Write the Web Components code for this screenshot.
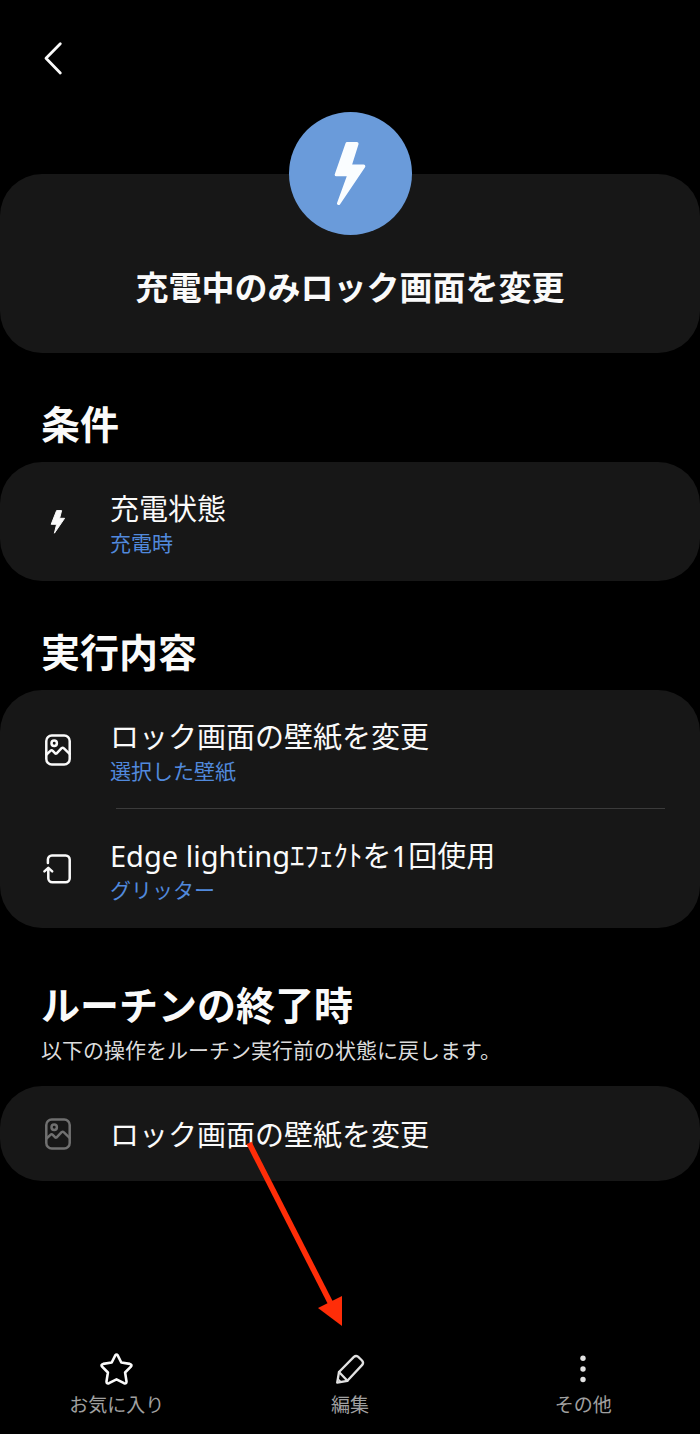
<!DOCTYPE html>
<html lang="ja">
<head>
<meta charset="utf-8">
<meta name="viewport" content="width=device-width, initial-scale=1">
<title>充電中のみロック画面を変更</title>
<style>
html {
    background: #000;
}

body {
    margin: 0;
    color: #fafafa;
    font-family: "Noto Sans", "Noto Sans CJK JP", sans-serif;
}
</style>
</head>
<body>
<routine-page>
    <routine-hero>充電中のみロック画面を変更</routine-hero>

    <routine-section heading="条件">
        <routine-row icon="bolt" detail="充電時">充電状態</routine-row>
    </routine-section>

    <routine-section heading="実行内容">
        <routine-row icon="picture" detail="選択した壁紙">ロック画面の壁紙を変更</routine-row>
        <routine-row icon="edge" detail="グリッター">Edge lightingｴﾌｪｸﾄを1回使用</routine-row>
    </routine-section>

    <routine-section heading="ルーチンの終了時" note="以下の操作をルーチン実行前の状態に戻します。">
        <routine-row icon="picture" muted>ロック画面の壁紙を変更</routine-row>
    </routine-section>

    <bottom-action slot="actions" icon="star">お気に入り</bottom-action>
    <bottom-action slot="actions" icon="pencil">編集</bottom-action>
    <bottom-action slot="actions" icon="more">その他</bottom-action>
</routine-page>

<script>
const icons = {
    back: `<svg width="36" height="36" viewBox="0 0 36 36" fill="none" stroke="currentColor" stroke-width="2.8" stroke-linecap="round" stroke-linejoin="round">
        <path d="M24.3 3.8 10 18.3 24.3 33"/></svg>`,
    bolt: `<svg width="32" height="36" viewBox="0 0 32 36" fill="currentColor" stroke="currentColor" stroke-linejoin="round">
        <path d="M14.6 6.6H19.6L17.6 14.3H22.6L12.4 29.2 14.6 20.3H9.2Z"/></svg>`,
    picture: `<svg width="32" height="36" viewBox="0 0 32 36" fill="none" stroke="currentColor" stroke-width="2.5" stroke-linecap="round" stroke-linejoin="round">
        <rect x="4.3" y="3.4" width="23.4" height="29.2" rx="5.5"/>
        <circle cx="12.2" cy="11.3" r="2.7"/>
        <path d="M4.5 22.5 8.7 18.6Q9.7 17.8 10.5 18.7L13 21.2Q14 22.1 14.9 21.1L19.6 16.2Q20.7 15.2 21.7 16.2L27.6 21.8"/></svg>`,
    edge: `<svg width="32" height="36" viewBox="0 0 32 36" fill="none" stroke="currentColor" stroke-width="2.5" stroke-linecap="round" stroke-linejoin="round">
        <path d="M5.9 12V8.4A4 4 0 0 1 9.9 4.4H23.7A4 4 0 0 1 27.7 8.4V27.3A4 4 0 0 1 23.7 31.3H10.3A4 4 0 0 1 6.3 27.3V17.5"/>
        <path d="M2.4 20.4 6.3 16.8 10.2 20.4"/></svg>`,
    star: `<svg width="36" height="36" viewBox="0 0 36 36" fill="none" stroke="#fafafa" stroke-width="2.6" stroke-linejoin="round">
        <path d="M16.3 4.3Q17.5 2.6 18.7 4.3L22.3 11.5 30.8 12.9Q33.5 13.6 31.9 15.6L26.1 21.5 27.5 30.4Q27.5 33.2 25 32.2L17.5 28.4 10 32.2Q7.5 33.2 7.5 30.4L8.9 21.5 3.1 15.6Q1.5 13.6 4.2 12.9L12.7 11.5Z"/></svg>`,
    pencil: `<svg width="36" height="36" viewBox="0 0 36 36" fill="none" stroke="#e2e2e2" stroke-width="2.3" stroke-linecap="round" stroke-linejoin="round">
        <path d="M5.2 31.6 7 21 21.9 5.9Q23.9 4.1 26 5.7L30 9.5Q32 11.8 30.2 13.9L15.4 29.8Z"/>
        <path d="M7 21 15.4 29.8"/>
        <path d="M5.8 27.8 9 31" stroke-width="1.6"/></svg>`,
    more: `<svg width="36" height="36" viewBox="0 0 36 36" fill="#e2e2e2">
        <circle cx="18" cy="7.3" r="2.7"/>
        <circle cx="18" cy="18" r="2.7"/>
        <circle cx="18" cy="28.5" r="2.7"/></svg>`
};

function attach(element, html) {
    const template = document.createElement('template');
    template.innerHTML = html;
    const root = element.attachShadow({ mode: 'open' });
    root.appendChild(template.content.cloneNode(true));
    return root;
}

customElements.define('routine-hero', class RoutineHero extends HTMLElement {
    constructor() {
        super();
        attach(this, `<style>
:host {
    display: flex;
    flex-direction: column;
    align-items: center;
}

.badge {
    display: flex;
    align-items: center;
    justify-content: center;
    width: 123px;
    height: 123px;
    border-radius: 50%;
    background: #6a9bda;
    z-index: 1;
}

/* the card starts at the middle of the badge */
.card {
    box-sizing: border-box;
    align-self: stretch;
    margin-top: -61px;
    padding: 90px 24px 41px;
    border-radius: 42px;
    background: #171717;
}

h1 {
    margin: 0;
    font-size: 33px;
    line-height: 48px;
    font-weight: bold;
    text-align: center;
}
</style>
<div class="badge">
    <svg width="32" height="63" viewBox="0 0 93 187" fill="#fafdff" stroke="#fafdff" stroke-width="10" stroke-linejoin="round" aria-hidden="true">
        <path d="M38 5H67L46 72H87L13 182 44 97H6Z"/>
    </svg>
</div>
<div class="card"><h1><slot></slot></h1></div>`);
    }
});

customElements.define('routine-section', class RoutineSection extends HTMLElement {
    constructor() {
        super();
        const note = this.getAttribute('note');
        attach(this, `<style>
:host {
    display: block;
    padding-top: 47px;
}

:host([note]) {
    padding-top: 53px;
}

header {
    padding: 0 41px 14px;
}

:host([note]) header {
    padding-bottom: 21px;
}

h2 {
    margin: 0;
    font-size: 39px;
    line-height: 48px;
    font-weight: bold;
}

p {
    margin: 6px 0 0;
    color: #dcdcdc;
    font-size: 21px;
    line-height: 30px;
}

.card {
    border-radius: 42px;
    background: #171717;
}

::slotted(routine-row:not(:first-child)) {
    --divider: block;
}
</style>
<header>
    <h2>${this.getAttribute('heading')}</h2>
    ${note ? `<p>${note}</p>` : ''}
</header>
<div class="card"><slot></slot></div>`);
    }
});

customElements.define('routine-row', class RoutineRow extends HTMLElement {
    constructor() {
        super();
        const detail = this.getAttribute('detail');
        attach(this, `<style>
:host {
    display: block;
}

hr {
    display: var(--divider, none);
    height: 1px;
    margin: -1px 35px 0 116px;
    border: 0;
    background: #3b3b3b;
}

.row {
    display: flex;
    align-items: center;
    gap: 36px;
    padding: 0 36px 0 42px;
}

.icon {
    display: flex;
    flex: none;
}

:host([muted]) .icon {
    color: #707070;
}

.text {
    padding: 28px 0 22px;
}

:host([muted]) .text {
    padding: 30px 0 28px;
}

.title {
    font-size: 29px;
    line-height: 37px;
}

.detail {
    color: #5189dc;
    font-size: 21px;
    line-height: 32px;
}
</style>
<hr>
<div class="row">
    <span class="icon" aria-hidden="true">${icons[this.getAttribute('icon')]}</span>
    <div class="text">
        <div class="title"><slot></slot></div>
        ${detail ? `<div class="detail">${detail}</div>` : ''}
    </div>
</div>`);
    }
});

customElements.define('bottom-action', class BottomAction extends HTMLElement {
    constructor() {
        super();
        attach(this, `<style>
:host {
    display: flex;
    flex: 1;
    justify-content: center;
}

button {
    display: flex;
    flex-direction: column;
    align-items: center;
    gap: 4px;
    padding: 0;
    border: 0;
    background: none;
    color: #a0a0a0;
    font: inherit;
    font-size: 19px;
    line-height: 28px;
    cursor: pointer;
}
</style>
<button type="button">${icons[this.getAttribute('icon')]}<span><slot></slot></span></button>`);
    }
});

customElements.define('routine-page', class RoutinePage extends HTMLElement {
    constructor() {
        super();
        attach(this, `<style>
:host {
    display: flex;
    flex-direction: column;
    min-height: 100vh;
}

.top {
    display: flex;
    padding: 40px 36px 36px;
}

.top button {
    display: flex;
    padding: 0;
    border: 0;
    background: none;
    color: #fafafa;
    cursor: pointer;
}

nav {
    position: relative;
    display: flex;
    margin-top: auto;
    padding: 24px 0 15px;
}

/* pointer that lies over the page and ends at the edit button */
.arrow {
    position: absolute;
    right: 50%;
    bottom: 100%;
    margin: 0 7px 1px 0;
    pointer-events: none;
}
</style>
<div class="top"><button type="button" aria-label="戻る">${icons.back}</button></div>
<main><slot></slot></main>
<nav>
    <slot name="actions"></slot>
    <svg class="arrow" width="98" height="187" viewBox="0 0 98 187" aria-hidden="true">
        <path d="M4 4 86 165" stroke="#ff2d08" stroke-width="5.6"/>
        <path d="M73 169 97 157V187Z" fill="#ff2d08"/>
    </svg>
</nav>`);
    }
});
</script>
</body>
</html>
